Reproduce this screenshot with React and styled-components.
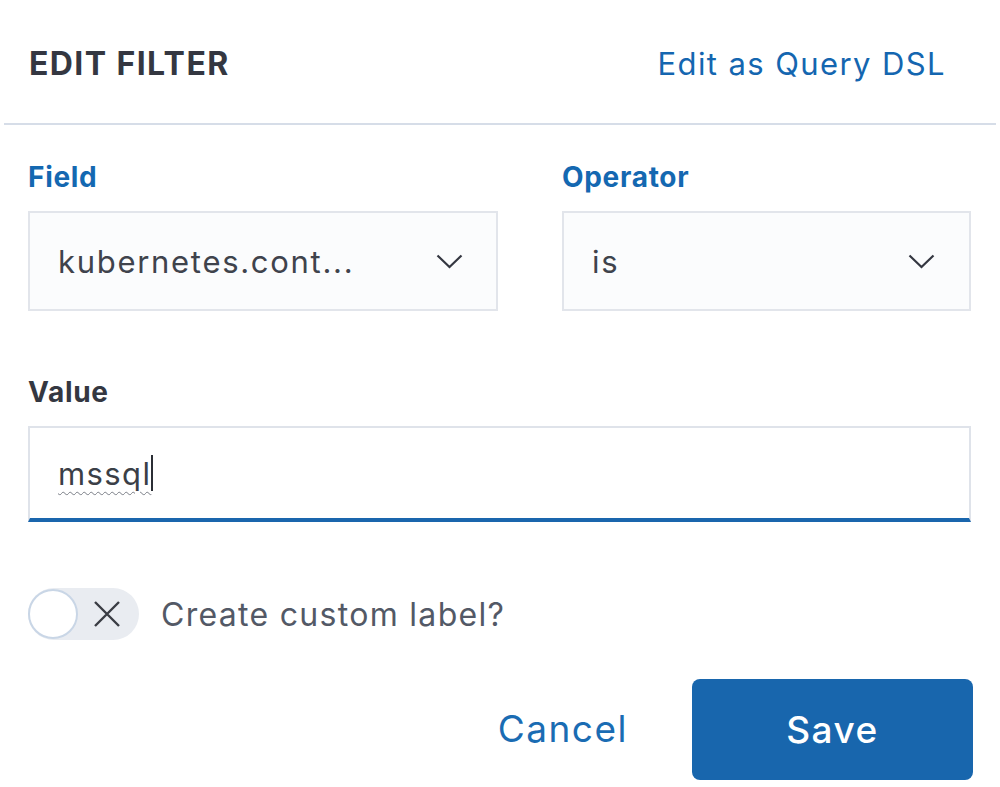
import React from 'react'
import styled, { createGlobalStyle } from 'styled-components'

const Global = createGlobalStyle`
  html, body {
    margin: 0;
    padding: 0;
    background: #ffffff;
  }
  body {
    font-family: Inter, "Noto Sans", "Liberation Sans", sans-serif;
    color: #343741;
  }
`

const Panel = styled.div`
  width: 1000px;
  height: 787px;
  background: #fff;
  overflow: hidden;
`

const Header = styled.div`
  height: 123px;
  box-sizing: border-box;
  padding: 4px 54px 0 29px;
  display: flex;
  align-items: center;
  justify-content: space-between;
`

const Title = styled.h2`
  margin: 0;
  font-size: 32px;
  line-height: 38px;
  font-weight: 700;
  color: #343741;
  letter-spacing: 1.4px;
`

const LinkButton = styled.a`
  font-size: ${p => p.size || 31}px;
  line-height: 1.2;
  letter-spacing: ${p => p.ls || 1.4}px;
  color: ${p => p.color || '#1466b0'};
  text-decoration: none;
  cursor: pointer;
`

const Divider = styled.hr`
  margin: 0 4px;
  border: 0;
  height: 2px;
  background: #d6dde8;
`

const Body = styled.div`
  padding: 35px 29px 0 28px;
`

const Row = styled.div`
  display: grid;
  grid-template-columns: 470px 409px;
  column-gap: 64px;
`

const Field = styled.div`
  display: flex;
  flex-direction: column;
  gap: 17px;
  margin-bottom: ${p => p.mb || 0}px;
`

const Label = styled.label`
  font-size: 28px;
  line-height: 34px;
  font-weight: 700;
  letter-spacing: 0.7px;
  color: ${p => (p.blue ? '#1468b1' : '#343741')};
`

const Select = styled.div`
  height: 100px;
  box-sizing: border-box;
  border: 2px solid #e2e5eb;
  background: #fbfcfd;
  display: flex;
  align-items: center;
  justify-content: space-between;
  padding: 0 ${p => p.pr || 33}px 0 ${p => p.pl || 28}px;
  font-size: 31px;
  letter-spacing: 1.7px;
  color: #3f434c;
`

const Input = styled.div`
  height: 96px;
  box-sizing: border-box;
  border: 2px solid #dfe3ea;
  border-bottom: 4px solid #1a66ad;
  background: #fff;
  display: flex;
  align-items: center;
  padding: 0 28px 0 28px;
  font-size: 31px;
  letter-spacing: 1.4px;
  color: #3b3f47;
`

const Typed = styled.span`
  text-decoration: underline wavy #7a7e86 1px;
  text-underline-offset: 6px;
`

const Caret = styled.span`
  display: inline-block;
  width: 2px;
  height: 36px;
  background: #2b2e35;
`

const SwitchRow = styled.div`
  margin-top: 66px;
  display: flex;
  align-items: center;
  gap: 22px;
  height: 52px;
`

const Track = styled.div`
  width: 111px;
  height: 52px;
  border-radius: 26px;
  background: #e9ecf1;
  display: flex;
  align-items: center;
  gap: 15px;
`

const Knob = styled.span`
  width: 50px;
  height: 50px;
  box-sizing: border-box;
  border-radius: 50%;
  background: #fff;
  border: 2px solid #c9d6e6;
`

const SwitchText = styled.span`
  font-size: 32px;
  letter-spacing: 1.3px;
  color: #535966;
`

const Footer = styled.div`
  margin-top: 39px;
  margin-right: -2px;
  display: flex;
  justify-content: flex-end;
  align-items: center;
  gap: 64px;
`

const Primary = styled.button`
  width: 281px;
  height: 101px;
  border: 0;
  border-radius: 8px;
  background: #1866ad;
  color: #fff;
  font-family: inherit;
  font-size: 37px;
  font-weight: 500;
  letter-spacing: 1.5px;
`

const Chevron = () => (
  <svg width="27" height="15" viewBox="0 0 27 15" fill="none">
    <path d="M1.5 1.5 L13.5 13 L25.5 1.5" stroke="#343741" strokeWidth="2.2" />
  </svg>
)

const Cross = () => (
  <svg width="28" height="28" viewBox="0 0 28 28" fill="none">
    <path d="M2 2 L26 26 M26 2 L2 26" stroke="#3a3d44" strokeWidth="2.4" />
  </svg>
)

export default function App() {
  return (
    <Panel>
      <Global />
      <Header>
        <Title>EDIT FILTER</Title>
        <LinkButton>Edit as Query DSL</LinkButton>
      </Header>
      <Divider />
      <Body>
        <Row>
          <Field mb={64}>
            <Label blue>Field</Label>
            <Select>
              kubernetes.cont...
              <Chevron />
            </Select>
          </Field>
          <Field mb={64}>
            <Label blue>Operator</Label>
            <Select pr={34}>
              is
              <Chevron />
            </Select>
          </Field>
        </Row>
        <Field>
          <Label>Value</Label>
          <Input>
            <Typed>mssql</Typed>
            <Caret />
          </Input>
        </Field>
        <SwitchRow>
          <Track>
            <Knob />
            <Cross />
          </Track>
          <SwitchText>Create custom label?</SwitchText>
        </SwitchRow>
        <Footer>
          <LinkButton size={37} ls={1.5} color="#1a6cb3">Cancel</LinkButton>
          <Primary>Save</Primary>
        </Footer>
      </Body>
    </Panel>
  )
}
